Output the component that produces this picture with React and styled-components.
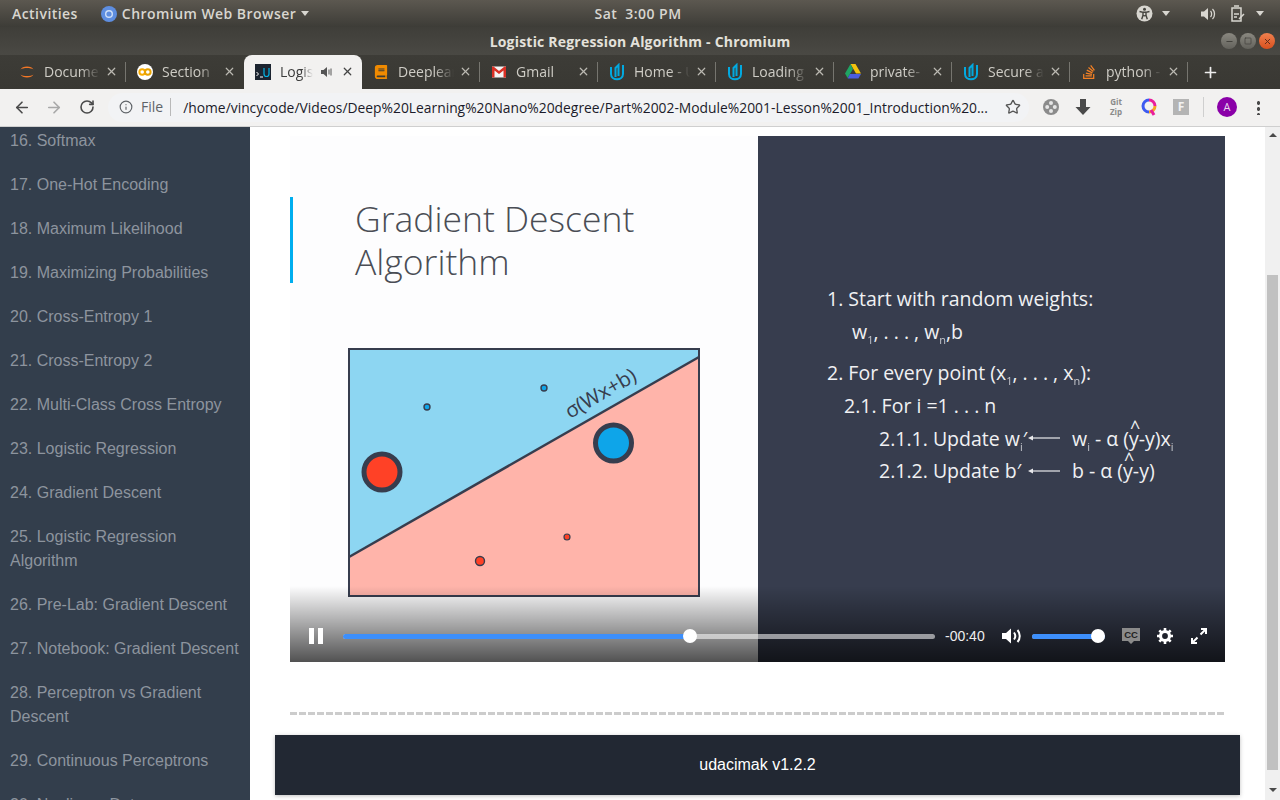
import React from 'react';
import styled, { createGlobalStyle } from 'styled-components';
import { ArrowLeft, ArrowRight, RotateCw, Info, Star, Plus, X, Minus, Square } from 'lucide-react';
import { FaBook, FaStackOverflow } from 'react-icons/fa';

const GlobalStyle = createGlobalStyle`
  html, body {
    margin: 0;
    height: 100%;
    overflow: hidden;
    background: #fff;
  }
  * { box-sizing: border-box; }
`;

const Desktop = styled.div`
  width: 1280px;
  height: 800px;
  display: flex;
  flex-direction: column;
  overflow: hidden;
  font-family: "Liberation Sans", Arial, sans-serif;
`;

/* ubuntu top panel */
const Panel = styled.div`
  height: 27px;
  flex: none;
  display: grid;
  grid-template-columns: 1fr auto 1fr;
  align-items: center;
  padding: 0 16px 0 12px;
  background: linear-gradient(#5c5850, #3d3c37);
  color: #d8d6d0;
  font: 600 14px "Open Sans", sans-serif;
  letter-spacing: .45px;
`;

const PanelLeft = styled.div`
  display: flex;
  align-items: center;
`;

const PanelApp = styled.div`
  display: flex;
  align-items: center;
  gap: 5px;
  margin-left: 23px;
`;

const PanelRight = styled.div`
  display: flex;
  align-items: center;
  justify-content: flex-end;
`;

const Caret = styled.span`
  width: 0;
  height: 0;
  margin-left: ${p => p.$left || 0}px;
  border: 4.5px solid transparent;
  border-top: 5px solid #d8d6d0;
  border-bottom: 0;
`;

const TitleBar = styled.div`
  height: 28px;
  flex: none;
  position: relative;
  display: flex;
  align-items: center;
  justify-content: center;
  background: linear-gradient(#3f3e39, #4a4944);
  color: #e3e1db;
  font: 700 14px "Open Sans", sans-serif;
  letter-spacing: .2px;
`;

const WindowButtons = styled.div`
  position: absolute;
  right: 5px;
  top: 6px;
  display: flex;
  gap: 3px;
`;

const WindowButton = styled.span`
  width: 16px;
  height: 16px;
  border-radius: 50%;
  display: flex;
  align-items: center;
  justify-content: center;
  color: ${p => (p.$close ? '#5a2a1a' : '#3f3e39')};
  background: ${p => (p.$close ? 'linear-gradient(#f0804e, #d9501e)' : 'linear-gradient(#8a8880, #63625c)')};
`;

const TabStrip = styled.div`
  height: 34px;
  flex: none;
  display: flex;
  padding-left: 8px;
  background: linear-gradient(#3d3c37, #393833);
`;

const TabBox = styled.div`
  position: relative;
  width: 118px;
  height: 34px;
  display: flex;
  align-items: center;
  padding: 0 8px 1px 11px;
  color: ${p => (p.$active ? '#3c3c3c' : '#cfcdc6')};
  background: ${p => (p.$active ? '#f2f1f0' : 'transparent')};
  border-radius: ${p => (p.$active ? '8px 8px 0 0' : '0')};
  font: 400 14px "Open Sans", sans-serif;
  &::before {
    content: '';
    display: ${p => (p.$sep ? 'block' : 'none')};
    position: absolute;
    right: 0;
    top: 7px;
    height: 20px;
    width: 1px;
    background: #76756f;
  }
`;

const TabIcon = styled.span`
  width: 16px;
  height: 16px;
  flex: none;
  display: flex;
  align-items: center;
  justify-content: center;
  margin-right: 9px;
`;

const TabTitle = styled.span`
  flex: 1;
  min-width: 0;
  overflow: hidden;
  white-space: nowrap;
  -webkit-mask-image: linear-gradient(to right, #000 65%, transparent);
  mask-image: linear-gradient(to right, #000 65%, transparent);
`;

const TabClose = styled.span`
  flex: none;
  display: flex;
  margin-left: 5px;
  color: ${p => (p.$active ? '#444' : '#bbb9b2')};
`;

const AudioIcon = styled.svg`
  flex: none;
  margin: 0 3px 0 8px;
`;

const NewTab = styled.span`
  display: flex;
  align-items: center;
  margin-left: 14px;
  color: #eee;
`;

const Toolbar = styled.div`
  height: 38px;
  flex: none;
  display: flex;
  align-items: center;
  padding: 0 20px 1px 13px;
  background: #f2f1f0;
  border-bottom: 1px solid #cfcfcf;
`;

const NavButton = styled.span`
  width: 18px;
  display: flex;
  justify-content: center;
  margin-right: ${p => p.$gap || 0}px;
  color: ${p => p.$color || '#4a4a4a'};
`;

const Omnibox = styled.div`
  width: 921px;
  height: 29px;
  flex: none;
  display: flex;
  align-items: center;
  padding: 0 8px 0 11px;
  border-radius: 15px;
  background: #f2f3f5;
  font: 400 14px "Open Sans", sans-serif;
`;

const Scheme = styled.span`
  color: #5f6368;
  margin-left: 8px;
  padding-right: 7px;
  border-right: 1px solid #b9b9b9;
  line-height: 18px;
`;

const Url = styled.span`
  flex: 1;
  min-width: 0;
  margin-left: 12px;
  color: #1b1b2a;
  white-space: nowrap;
  overflow: hidden;
  font-size: 13.85px;
`;

const Extensions = styled.div`
  flex: 1;
  display: flex;
  align-items: center;
  gap: 16px;
  padding-left: 14px;
`;

const GitZip = styled.span`
  width: 18px;
  color: #8a8a8a;
  font: 700 8px/10px "Open Sans", sans-serif;
  text-align: center;
`;

const FBadge = styled.span`
  width: 16px;
  height: 16px;
  background: #b4b4b4;
  color: #f2f2f2;
  font: 700 12px/16px "Open Sans", sans-serif;
  text-align: center;
`;

const ToolbarSep = styled.span`
  width: 1px;
  height: 20px;
  margin: 0 -3px 0 -2px;
  background: #cfcfcf;
`;

const Avatar = styled.span`
  width: 20px;
  height: 20px;
  border-radius: 50%;
  background: #8a00a8;
  color: #e8d8ee;
  font: 400 11px/20px "Open Sans", sans-serif;
  text-align: center;
`;

const Dots = styled.span`
  width: 3px;
  height: 15px;
  margin-left: 4px;
  background: radial-gradient(circle, #4a4a4a 1.6px, transparent 2px) 0 0 / 3px 6px;
`;

/* page */
const Page = styled.div`
  flex: 1;
  min-height: 0;
  display: flex;
  background: #fff;
`;

const Sidebar = styled.nav`
  width: 250px;
  flex: none;
  overflow: hidden;
  background: #333e4c;
`;

const LessonList = styled.ul`
  list-style: none;
  margin: -8px 0 0;
  padding: 0;
`;

const Lesson = styled.li`
  padding: 10px;
  color: #8d949e;
  font-size: 16px;
  line-height: 24px;
`;

const Main = styled.main`
  flex: 1;
  min-width: 0;
  padding: 9px 25px 0;
  overflow: hidden;
`;

const Video = styled.div`
  position: relative;
  width: 935px;
  height: 526px;
  margin: 0 15px;
  display: flex;
  overflow: hidden;
`;

const SlideLeft = styled.div`
  flex: 0 0 467.5px;
  padding-top: 61px;
  background: #fdfdfe;
`;

const SlideHeading = styled.h1`
  margin: 0 0 65px;
  padding-left: 62px;
  border-left: 3px solid #00aeef;
  color: #4a4d55;
  font: 300 35.5px/43px "Open Sans", sans-serif;
`;

const Diagram = styled.svg`
  display: block;
  margin-left: 58px;
`;

const SlideRight = styled.div`
  flex: 1;
  padding: 146px 0 0 69.5px;
  background: #373d4e;
  color: #f0f1f3;
  font: 400 19.5px/33px "Open Sans", sans-serif;
`;

const SlideLine = styled.div`
  padding-left: ${p => p.$indent || 0}px;
  margin-top: ${p => p.$top || 0}px;
  white-space: nowrap;
`;

const Sub = styled.sub`
  font-size: 11px;
  line-height: 0;
  vertical-align: -5px;
  opacity: .75;
`;

const UpdateGrid = styled.div`
  display: grid;
  grid-template-columns: 149px 44px auto;
  grid-auto-rows: 32.5px;
  align-items: center;
  padding-left: 52px;
  white-space: nowrap;
`;

const Hat = styled.span`
  position: relative;
  &::before {
    content: '^';
    position: absolute;
    left: 1px;
    top: -14px;
    font-size: 18px;
  }
`;

const ControlsOverlay = styled.div`
  position: absolute;
  left: 0;
  right: 0;
  bottom: 0;
  height: 76px;
  display: flex;
  align-items: flex-end;
  padding: 0 18px 16px 19px;
  background: linear-gradient(rgba(0,0,0,0), rgba(0,0,0,.68));
  color: #fff;
`;

const ControlRow = styled.div`
  width: 100%;
  height: 20px;
  display: flex;
  align-items: center;
`;

const Track = styled.div`
  position: relative;
  flex: ${p => (p.$width ? `0 0 ${p.$width}px` : '1')};
  height: 5px;
  margin: ${p => p.$margin};
  border-radius: 3px;
  background: rgba(255, 255, 255, .55);
`;

const TrackFill = styled.div`
  height: 100%;
  border-radius: 3px;
  background: #3d8ffb;
`;

const Knob = styled.span`
  position: absolute;
  top: -4.5px;
  width: 14px;
  height: 14px;
  margin-left: -7px;
  border-radius: 50%;
  background: #fff;
`;

const TimeLabel = styled.span`
  width: 57px;
  font-size: 14px;
  color: #eee;
`;

const ControlIcon = styled.svg`
  flex: none;
  display: block;
  margin-left: ${p => p.$left || 0}px;
`;

const Divider = styled.div`
  height: 3px;
  margin: 50px 15px 0;
  background: repeating-linear-gradient(to right, #ccc 0 7px, transparent 7px 9px);
`;

const Footer = styled.footer`
  height: 60px;
  margin-top: 20px;
  display: flex;
  align-items: center;
  justify-content: center;
  background: #222833;
  color: #fff;
  font-size: 16px;
  box-shadow: 0 1px 4px rgba(0, 0, 0, .25);
`;

const Scrollbar = styled.div`
  width: 15px;
  flex: none;
  display: flex;
  flex-direction: column;
  align-items: center;
  background: #f0f0f0;
`;

const ScrollArrow = styled.span`
  width: 0;
  height: 0;
  margin: ${p => (p.$down ? '18px 0 0' : '6px 0 0')};
  border: 4px solid transparent;
  border-bottom: ${p => (p.$down ? '0' : '4px solid #4a4a4a')};
  border-top: ${p => (p.$down ? '4px solid #4a4a4a' : '0')};
`;

const ScrollThumb = styled.span`
  width: 11px;
  height: 495px;
  margin-top: 138px;
  background: #c1c1c1;
`;

const Chromium = () => (
  <svg width="16" height="16" viewBox="0 0 16 16">
    <circle cx="8" cy="8" r="8" fill="#5e8ee0" />
    <circle cx="8" cy="8" r="4" fill="#cfe0f8" />
    <circle cx="8" cy="8" r="2.6" fill="#5e8ee0" />
  </svg>
);

const Jupyter = () => (
  <svg width="16" height="16" viewBox="0 0 16 16" fill="#f37726">
    <path d="M1.5 5.5C3 1.5 13 1.5 14.5 5.5 12 3.5 4 3.5 1.5 5.5z" />
    <path d="M1.5 10.5C3 14.5 13 14.5 14.5 10.5 12 12.5 4 12.5 1.5 10.5z" />
  </svg>
);

const Colab = () => (
  <svg width="16" height="16" viewBox="0 0 16 16">
    <circle cx="8" cy="8" r="8" fill="#fff" />
    <circle cx="5.2" cy="8" r="2.8" fill="none" stroke="#f9ab00" strokeWidth="2" />
    <circle cx="10.8" cy="8" r="2.8" fill="none" stroke="#e8a200" strokeWidth="2" />
  </svg>
);

const Term = () => (
  <svg width="16" height="16" viewBox="0 0 16 16">
    <rect width="16" height="16" fill="#1c2430" />
    <path d="M1.5 8l2 2-2 2M5 13h3" stroke="#fff" fill="none" strokeWidth="1" />
    <path d="M9 4v6a2.5 2.5 0 0 0 5 0V4" stroke="#02b3e4" fill="none" strokeWidth="1.2" />
  </svg>
);

const Gmail = () => (
  <svg width="16" height="16" viewBox="0 0 16 16">
    <rect x="1" y="2.5" width="14" height="11" fill="#f4f4f4" />
    <path d="M1 13.5v-11h1.5L8 7l5.5-4.5H15v11h-2.5V6.5L8 10 3.500 6.500v7z" fill="#d93025" />
  </svg>
);

const UdacityU = () => (
  <svg width="16" height="18" viewBox="0 0 16 18" fill="none" stroke="#02a9e0" strokeWidth="2">
    <path d="M2 4v7c0 7 12 7 12 0V2" />
    <path d="M6.500 14V5l3-3v11" />
  </svg>
);

const Drive = () => (
  <svg width="16" height="15" viewBox="0 0 16 15">
    <path d="M5.500 0h5L16 9.500h-5z" fill="#f4c20d" />
    <path d="M5.500 0L0 9.500 2.600 14 8 5z" fill="#1fa463" />
    <path d="M2.600 14.500h10.800L16 10H5z" fill="#4b5de0" />
  </svg>
);

const tabs = [
  { title: 'Document', icon: <Jupyter />, sep: true },
  { title: 'Section', icon: <Colab /> },
  { title: 'Logistic', icon: <Term />, active: true, audio: true },
  { title: 'Deeplearning', icon: <FaBook size={14} color="#f08a00" />, sep: true },
  { title: 'Gmail', icon: <Gmail />, sep: true },
  { title: 'Home - Udacity', icon: <UdacityU />, sep: true },
  { title: 'Loading', icon: <UdacityU />, sep: true },
  { title: 'private-', icon: <Drive />, sep: true },
  { title: 'Secure a', icon: <UdacityU />, sep: true },
  { title: 'python -', icon: <FaStackOverflow size={16} color="#f48024" />, sep: true },
];

const lessons = [
  '16. Softmax',
  '17. One-Hot Encoding',
  '18. Maximum Likelihood',
  '19. Maximizing Probabilities',
  '20. Cross-Entropy 1',
  '21. Cross-Entropy 2',
  '22. Multi-Class Cross Entropy',
  '23. Logistic Regression',
  '24. Gradient Descent',
  '25. Logistic Regression Algorithm',
  '26. Pre-Lab: Gradient Descent',
  '27. Notebook: Gradient Descent',
  '28. Perceptron vs Gradient Descent',
  '29. Continuous Perceptrons',
  '30. Nonlinear Data',
];

const Arrow = () => (
  <svg width="32" height="8" viewBox="0 0 32 8">
    <path d="M4 4h28" stroke="#e8e9ec" strokeWidth="1.2" />
    <path d="M0 4l5-2.500v5z" fill="#e8e9ec" />
  </svg>
);

const Tab = ({ title, icon, active, audio, sep }) => (
  <TabBox $active={active} $sep={sep}>
    <TabIcon>{icon}</TabIcon>
    <TabTitle>{title}</TabTitle>
    {audio && (
      <AudioIcon width="12" height="12" viewBox="0 0 12 12" fill="#555">
        <path d="M0 4h2.500L6 1v10L2.500 8H0z" />
        <path d="M8 3.500v5M10 2.500v7" stroke="#555" strokeWidth="1" />
      </AudioIcon>
    )}
    <TabClose $active={active}><X size={13} strokeWidth={2.2} /></TabClose>
  </TabBox>
);

const App = () => (
  <Desktop>
    <GlobalStyle />
    <Panel>
      <PanelLeft>
        Activities
        <PanelApp>
          <Chromium />
          Chromium Web Browser
          <Caret $left={0} />
        </PanelApp>
      </PanelLeft>
      <span>Sat&nbsp; 3:00 PM</span>
      <PanelRight>
        <svg width="17" height="17" viewBox="0 0 17 17">
          <circle cx="8.500" cy="8.500" r="8" fill="#d8d6d0" />
          <circle cx="8.500" cy="4.300" r="1.500" fill="#45443f" />
          <path d="M3.500 6.500l3.500.8v3l-1.300 4M13.500 6.500l-3.500.8v3l1.300 4M7 7.300h3M7 10.300l1.500.5 1.500-.5" stroke="#45443f" strokeWidth="1.400" fill="none" />
        </svg>
        <Caret $left={9} />
        <svg style={{ marginLeft: 31 }} width="16" height="16" viewBox="0 0 16 16" fill="#d8d6d0">
          <path d="M0 5.500h3L7 2v12l-4-3.500H0z" />
          <path d="M9.500 5c1.500 1.500 1.500 4.500 0 6M11.500 3c2.700 2.500 2.700 7.500 0 10" stroke="#d8d6d0" strokeWidth="1.300" fill="none" />
        </svg>
        <svg style={{ marginLeft: 13 }} width="16" height="17" viewBox="0 0 16 17" fill="none" stroke="#d8d6d0" strokeWidth="1.500">
          <path d="M4 1h5M2 3h9v13H2z" />
          <path d="M4 9h5M4 12h3M9 14l5-5" />
        </svg>
        <Caret $left={10} />
      </PanelRight>
    </Panel>

    <TitleBar>
      Logistic Regression Algorithm - Chromium
      <WindowButtons>
        <WindowButton><Minus size={9} strokeWidth={2.500} /></WindowButton>
        <WindowButton><Square size={8} strokeWidth={2} /></WindowButton>
        <WindowButton $close><X size={9} strokeWidth={2.500} /></WindowButton>
      </WindowButtons>
    </TitleBar>

    <TabStrip>
      {tabs.map(t => <Tab key={t.title} {...t} />)}
      <NewTab><Plus size={17} strokeWidth={2.400} /></NewTab>
    </TabStrip>

    <Toolbar>
      <NavButton $gap={14}><ArrowLeft size={19} strokeWidth={2.200} /></NavButton>
      <NavButton $gap={15} $color="#a8a8a8"><ArrowRight size={19} strokeWidth={2.200} /></NavButton>
      <NavButton $gap={13}><RotateCw size={16} strokeWidth={2.400} /></NavButton>
      <Omnibox>
        <Info size={14} color="#5f6368" strokeWidth={2} />
        <Scheme>File</Scheme>
        <Url>/home/vincycode/Videos/Deep%20Learning%20Nano%20degree/Part%2002-Module%2001-Lesson%2001_Introduction%20...</Url>
        <Star size={16} color="#555" strokeWidth={2} />
      </Omnibox>
      <Extensions>
        <svg width="16" height="18" viewBox="0 0 16 18">
          <circle cx="8" cy="9" r="8" fill="#8b8b8b" />
          <circle cx="8" cy="5" r="2" fill="#e6e6e6" />
          <circle cx="8" cy="13" r="2" fill="#e6e6e6" />
          <circle cx="4.200" cy="9" r="2" fill="#e6e6e6" />
          <circle cx="11.800" cy="9" r="2" fill="#e6e6e6" />
        </svg>
        <svg width="16" height="16" viewBox="0 0 16 16" fill="#4a4a4a">
          <path d="M5 0h6v8h4.500L8 16 .5 8H5z" />
        </svg>
        <GitZip>Git<br />Zip</GitZip>
        <svg width="16" height="18" viewBox="0 0 16 18" fill="none" strokeWidth="3">
          <path d="M8 2a6 6 0 0 0 0 12" stroke="#3d5af1" />
          <path d="M8 2a6 6 0 0 1 6 6" stroke="#e91e9c" />
          <path d="M14 8a6 6 0 0 1-6 6" stroke="#f5a623" />
          <path d="M10 12l3 5" stroke="#e91e9c" />
        </svg>
        <FBadge>F</FBadge>
        <ToolbarSep />
        <Avatar>A</Avatar>
        <Dots />
      </Extensions>
    </Toolbar>

    <Page>
      <Sidebar>
        <LessonList>
          {lessons.map(l => <Lesson key={l}>{l}</Lesson>)}
        </LessonList>
      </Sidebar>

      <Main>
        <Video>
          <SlideLeft>
            <SlideHeading>Gradient Descent<br />Algorithm</SlideHeading>
            <Diagram width="352" height="249" viewBox="0 0 352 249">
              <rect x="1" y="1" width="350" height="247" fill="#8dd6f2" />
              <path d="M1 209L351 9V248H1z" fill="#ffb4aa" />
              <path d="M1 209L351 9" stroke="#373d4e" strokeWidth="2.500" />
              <rect x="1" y="1" width="350" height="247" fill="none" stroke="#373d4e" strokeWidth="2" />
              <text transform="translate(222 71) rotate(-30)" fontFamily="Open Sans" fontSize="20.500" fill="#373d4e">σ(Wx+b)</text>
              <circle cx="34" cy="124" r="18" fill="#ff4126" stroke="#373d4e" strokeWidth="5" />
              <circle cx="265.500" cy="95" r="18" fill="#0ea5e9" stroke="#373d4e" strokeWidth="5" />
              <circle cx="79" cy="59" r="3" fill="#0ea5e9" stroke="#373d4e" strokeWidth="1.400" />
              <circle cx="196" cy="40" r="3" fill="#0ea5e9" stroke="#373d4e" strokeWidth="1.400" />
              <circle cx="132" cy="213" r="4.500" fill="#ff4126" stroke="#373d4e" strokeWidth="1.400" />
              <circle cx="219" cy="189" r="3" fill="#ff4126" stroke="#373d4e" strokeWidth="1.200" />
            </Diagram>
          </SlideLeft>
          <SlideRight>
            <SlideLine>1. Start with random weights:</SlideLine>
            <SlideLine $indent={25}>w<Sub>1</Sub>, . . . , w<Sub>n</Sub>,b</SlideLine>
            <SlideLine $top={8}>2. For every point (x<Sub>1</Sub>, . . . , x<Sub>n</Sub>):</SlideLine>
            <SlideLine $indent={17}>2.1. For i =1 . . . n</SlideLine>
            <UpdateGrid>
              <span>2.1.1. Update w<Sub>i</Sub>′</span>
              <Arrow />
              <span>w<Sub>i</Sub> - α (<Hat>y</Hat>-y)x<Sub>i</Sub></span>
              <span>2.1.2. Update b′</span>
              <Arrow />
              <span>b - α (<Hat>y</Hat>-y)</span>
            </UpdateGrid>
          </SlideRight>
          <ControlsOverlay>
            <ControlRow>
              <ControlIcon width="14" height="16" viewBox="0 0 14 16" fill="#fff">
                <rect width="5" height="16" />
                <rect x="9" width="5" height="16" />
              </ControlIcon>
              <Track $margin="0 10px 0 20px">
                <TrackFill style={{ width: '58.600%' }} />
                <Knob style={{ left: '58.600%' }} />
              </Track>
              <TimeLabel>-00:40</TimeLabel>
              <ControlIcon width="20" height="16" viewBox="0 0 20 16" fill="#fff">
                <path d="M0 5h4l5-4.500v15L4 11H0z" />
                <path d="M12 4.500c1.500 2 1.500 5 0 7M15.500 2c3 3.500 3 8.500 0 12" stroke="#fff" strokeWidth="2" fill="none" />
              </ControlIcon>
              <Track $width={73} $margin="0 17px 0 10px">
                <TrackFill style={{ width: '100%' }} />
                <Knob style={{ left: '90%' }} />
              </Track>
              <ControlIcon width="18" height="16" viewBox="0 0 18 16">
                <path d="M0 0h18v13h-6l-3 3-3-3H0z" fill="#8a8a8a" />
                <text x="9" y="10" textAnchor="middle" fontFamily="Liberation Sans" fontWeight="700" fontSize="9.500" fill="#222">CC</text>
              </ControlIcon>
              <ControlIcon $left={17} width="16" height="16" viewBox="0 0 16 16" fill="none">
                <circle cx="8" cy="8" r="4.500" stroke="#fff" strokeWidth="3.200" />
                <path d="M8 0v3M8 13v3M0 8h3M13 8h3M2.300 2.300l2.200 2.200M11.500 11.500l2.200 2.200M2.300 13.700l2.200-2.200M11.500 4.500l2.200-2.200" stroke="#fff" strokeWidth="2.600" />
              </ControlIcon>
              <ControlIcon $left={18} width="16" height="16" viewBox="0 0 16 16" fill="none" stroke="#fff" strokeWidth="2">
                <path d="M10 1h5v5M15 1l-5.500 5.500M6 15H1v-5M1 15l5.500-5.500" />
              </ControlIcon>
            </ControlRow>
          </ControlsOverlay>
        </Video>
        <Divider />
        <Footer>udacimak v1.2.2</Footer>
      </Main>

      <Scrollbar>
        <ScrollArrow />
        <ScrollThumb />
        <ScrollArrow $down />
      </Scrollbar>
    </Page>
  </Desktop>
);

export default App;
